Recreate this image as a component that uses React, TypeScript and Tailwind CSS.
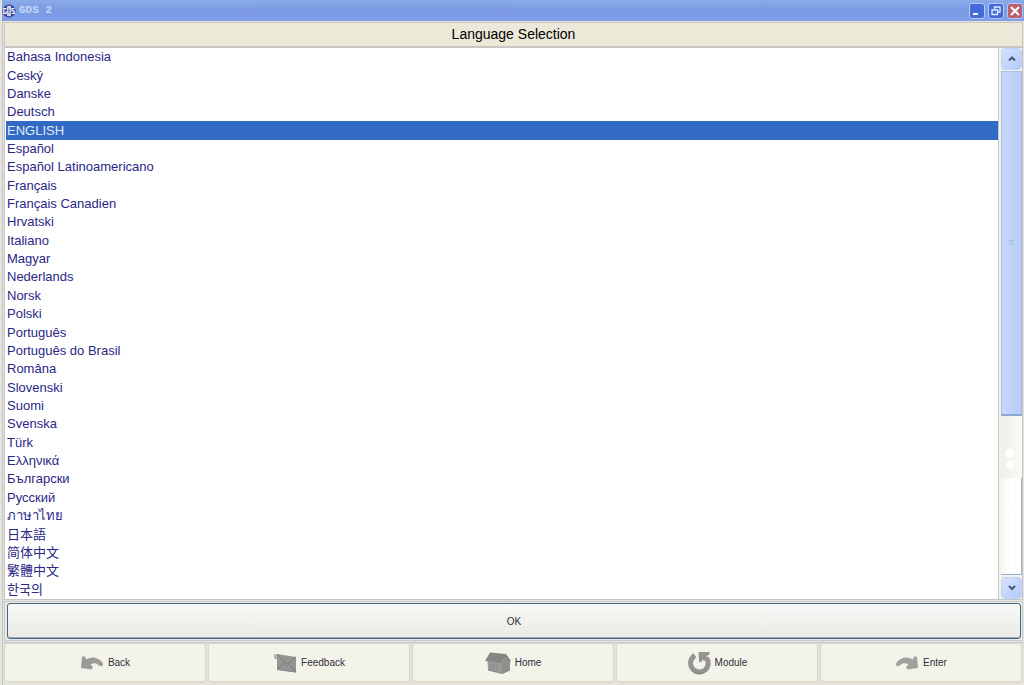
import { useState } from "react";
import type { ReactNode } from "react";

const LANGUAGES = [
  "Bahasa Indonesia",
  "Ceský",
  "Danske",
  "Deutsch",
  "ENGLISH",
  "Español",
  "Español Latinoamericano",
  "Français",
  "Français Canadien",
  "Hrvatski",
  "Italiano",
  "Magyar",
  "Nederlands",
  "Norsk",
  "Polski",
  "Português",
  "Português do Brasil",
  "Româna",
  "Slovenski",
  "Suomi",
  "Svenska",
  "Türk",
  "Ελληνικά",
  "Български",
  "Русский",
  "ภาษาไทย",
  "日本語",
  "简体中文",
  "繁體中文",
  "한국의",
];

function AppIcon() {
  return (
    <svg viewBox="0 0 14 14" className="h-3.5 w-3.5" aria-hidden="true">
      <circle cx="7" cy="7" r="6" fill="#3a4797" stroke="#26328a" />
      <path d="M5 1.8 H9 V12.2 H5Z" fill="#cdd3ea" />
      <path d="M4.6 4.6 H1.8 V9.4 H4.2 V7.2 M9.8 9.4 H12.2 V7 H10 V4.6 H12.4" fill="none" stroke="#f2f4fb" strokeWidth="1.2" />
      <path d="M6.4 4.6 V9.4 M7.8 5.2 V8.8" stroke="#6d77ad" strokeWidth=".8" />
    </svg>
  );
}

function Chevron({ down = false }: { down?: boolean }) {
  return (
    <svg viewBox="0 0 10 8" className="h-2 w-2.5" aria-hidden="true">
      <path d={down ? "M2 2 L5 5 L8 2" : "M2 5.5 L5 2.5 L8 5.5"} fill="none" stroke="#42587f" strokeWidth="2" />
    </svg>
  );
}

const arrow =
  "M2 1.5 L5 1.5 L6.5 4.5 C11 1 18 2 22 7 C23.4 9 23.4 10.6 22 11 C20.3 11.3 19 10.4 17.5 9.2 C15.5 7.8 13 8 10.5 9.5 L13 12 L11.5 14.5 L1 13 Z";

function BackIcon() {
  return (
    <svg viewBox="0 0 24 16" className="h-4 w-6" aria-hidden="true">
      <path d={arrow} fill="#9b9b99" />
    </svg>
  );
}

function EnterIcon() {
  return (
    <svg viewBox="0 0 24 16" className="h-4 w-6" aria-hidden="true">
      <path d={arrow} fill="#a1a19f" transform="translate(24 0) scale(-1 1)" />
    </svg>
  );
}

function FeedbackIcon() {
  return (
    <svg viewBox="0 0 24 20" className="h-5 w-6" aria-hidden="true">
      <path d="M1 1.5 L6 1 V7 L1 5.5Z" fill="#b4b4b0" />
      <path d="M4 1 L23 4 V19.5 L4 16.5Z" fill="#959594" />
      <path d="M4 1 L13.5 11.5 L23 4 M4 16.5 L11.5 9.4 M23 19 L15 10.3" fill="none" stroke="#7c7c7b" strokeWidth="1" />
      <path d="M4 16.5 L23 19" stroke="#858583" strokeWidth="1" />
    </svg>
  );
}

function HomeIcon() {
  return (
    <svg viewBox="0 0 26 22" className="h-[22px] w-[26px]" aria-hidden="true">
      <path d="M2.5 9 L20 10 L25 9 V18 L17 21.5 L3 18Z" fill="#9c9c9a" />
      <path d="M16 11 L21 5 L25 10 V18 L17 21.5Z" fill="#8f8f8e" />
      <path d="M5 .5 L21 2 L26 9 L24 9.8 L20.5 5.5 L16 11 L0 9Z" fill="#858584" />
      <path d="M6 11 V18 M9 11.5 V18.5 M12 11.5 V19" stroke="#858584" strokeWidth="1" />
      <path d="M3 18 L17 21.5 L25 18" fill="none" stroke="#858584" />
    </svg>
  );
}

function ModuleIcon() {
  return (
    <svg viewBox="0 0 24 24" className="h-6 w-6" aria-hidden="true">
      <path d="M8 4.5 A8.8 8.8 0 1 0 19.5 7" fill="none" stroke="#949493" strokeWidth="5" />
      <path d="M11.5 1 H22.5 V3.5 L19.5 5 L21 8 L17 10 L15.5 8.5 L14.5 11 H12Z" fill="#949493" />
      <path d="M4.5 19.5 A10.5 10.5 0 0 0 19.5 19.5" fill="none" stroke="#868685" strokeWidth="1" />
    </svg>
  );
}

const NAV: { label: string; icon: ReactNode }[] = [
  { label: "Back", icon: <BackIcon /> },
  { label: "Feedback", icon: <FeedbackIcon /> },
  { label: "Home", icon: <HomeIcon /> },
  { label: "Module", icon: <ModuleIcon /> },
  { label: "Enter", icon: <EnterIcon /> },
];

const windowButton =
  "flex h-4 w-4 items-center justify-center rounded-[3px] border border-[#b7c8f3]";
const scrollButton =
  "flex h-[22px] shrink-0 items-center justify-center rounded-sm border border-[#c3d2f8] bg-linear-to-br from-[#d6e2fe] to-[#b5cafa]";

export default function App() {
  const [selected, setSelected] = useState("ENGLISH");

  return (
    <div className="flex h-screen flex-col bg-[#e4e4de] font-['Liberation_Sans','Noto_Sans','Noto_Sans_CJK_SC',sans-serif] text-[#302f3c]">
      <header className="ml-0.5 flex h-[21px] shrink-0 items-center gap-[3px] bg-linear-to-b from-[#8aabea] via-[#7b9ae2] to-[#7f9fe9] pr-px">
        <AppIcon />
        <h1 className="flex-1 font-['Liberation_Mono',monospace] text-[11px] font-bold text-[#c3d8fa]">GDS 2</h1>
        <div className="flex gap-[3px]">
          <button type="button" aria-label="Minimize" className={`${windowButton} bg-[#436bd9]`}>
            <svg viewBox="0 0 12 12" className="h-3 w-3" aria-hidden="true">
              <path d="M2 9 H7" stroke="#fff" strokeWidth="2" />
            </svg>
          </button>
          <button type="button" aria-label="Restore" className={`${windowButton} bg-[#436bd9]`}>
            <svg viewBox="0 0 12 12" className="h-3 w-3" aria-hidden="true">
              <path d="M4.5 4 V2 H10 V7 H8 M2 5 H7.5 V9.5 H2Z" fill="none" stroke="#e6edff" strokeWidth="1.3" />
            </svg>
          </button>
          <button type="button" aria-label="Close" className={`${windowButton} bg-[#b9606f]`}>
            <svg viewBox="0 0 12 12" className="h-3 w-3 shrink-0" aria-hidden="true">
              <path d="M2 2 L10 10 M10 2 L2 10" stroke="#fff" strokeWidth="2" />
            </svg>
          </button>
        </div>
      </header>

      <div className="ml-0.5 flex min-h-0 flex-1 flex-col border-l border-[#c3c5c6] pb-px pl-px">
        <h2 className="mt-px mr-px flex h-[25px] shrink-0 items-center justify-center border border-[#cbc9bd] bg-[#ece9d8] text-[14px] text-black">
          Language Selection
        </h2>

        <main className="mr-px flex min-h-0 flex-1 border border-[#c4c6c6] bg-white">
          <ul role="listbox" aria-label="Language" className="flex min-w-0 flex-1 flex-col pl-px">
            {LANGUAGES.map((name) => (
              <li key={name} role="presentation" className="flex min-h-0 flex-1">
                <button
                  type="button"
                  role="option"
                  aria-selected={name === selected}
                  onClick={() => setSelected(name)}
                  className={`flex flex-1 items-center pl-px text-left text-[13px] leading-[18px] ${
                    name === selected ? "bg-[#316ac5] text-[#e2ebfa]" : "text-[#2a2787]"
                  }`}
                >
                  {name}
                </button>
              </li>
            ))}
          </ul>
          <div className="flex w-6 shrink-0 flex-col border-l border-[#c4c8c8] bg-[#f3f3ed] pl-0.5">
            <button type="button" aria-label="Scroll up" className={scrollButton}>
              <Chevron />
            </button>
            <div className="mt-px flex min-h-0 flex-1 flex-col border-b border-[#8fb0cf]">
              <div className="flex min-h-0 flex-[345] items-center justify-center border border-b-2 border-[#a9bde8] border-b-[#8ba8d5] bg-linear-to-r from-[#c8d8fc] to-[#b8ccf8]">
                <svg viewBox="0 0 6 6" className="h-1.5 w-1.5" aria-hidden="true">
                  <path d="M0 .5 H5 M0 2.5 H5 M0 4.5 H5" stroke="#9fc0e0" />
                </svg>
              </div>
              <div className="flex min-h-0 flex-[62] items-end justify-center bg-linear-to-r from-[#efefe8] to-[#fafaf7] pr-1">
                <svg viewBox="0 0 10 32" className="h-8 w-2.5" aria-hidden="true">
                  <circle cx="5" cy="7" r="4.5" fill="#fff" />
                  <circle cx="5.5" cy="19" r="4" fill="#fff" />
                </svg>
              </div>
              <div className="min-h-0 flex-[97] border-r border-[#9bb6cb] bg-linear-to-r from-[#f5f5f0] via-white to-[#fdfdfc]" />
            </div>
            <button type="button" aria-label="Scroll down" className={`mt-0.5 ${scrollButton}`}>
              <Chevron down />
            </button>
          </div>
        </main>

        <div className="mt-px mr-px h-10 shrink-0 border border-[#c8cbcb] bg-[#e9ebe9] py-px pr-px pl-0.5">
          <button
            type="button"
            className="h-full w-full rounded-[3px] border border-[#45657f] bg-linear-to-b from-[#f8f8f6] to-[#eaebe6] text-[10px] shadow-[inset_0_-1px_#9fb1b8]"
          >
            OK
          </button>
        </div>

        <nav aria-label="Actions" className="mt-px grid h-[42px] shrink-0 grid-cols-5 gap-0.5 border-t border-[#c8cbcb] bg-[#e4e2d6] pr-0.5 pb-0.5">
          {NAV.map(({ label, icon }) => (
            <button
              key={label}
              type="button"
              className="flex items-center justify-center gap-1 rounded-[3px] border border-[#d8d6c9] bg-[#f4f3e9] text-[10px]"
            >
              {icon}
              <span>{label}</span>
            </button>
          ))}
        </nav>
      </div>
    </div>
  );
}
